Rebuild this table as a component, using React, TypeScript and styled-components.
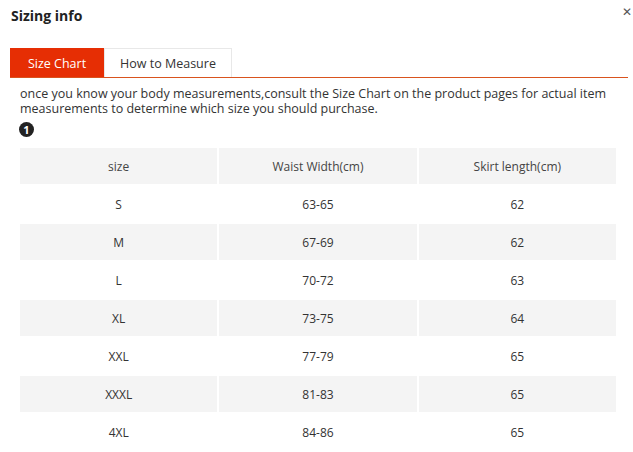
import styled, { createGlobalStyle } from "styled-components";

const GlobalStyle = createGlobalStyle`
  html, body {
    margin: 0;
    padding: 0;
    background: #fff;
  }
  body {
    font-family: "Open Sans", "Liberation Sans", sans-serif;
    color: #333;
  }
`;

const Dialog = styled.div`
  width: 633px;
  height: 452px;
  box-sizing: border-box;
  padding: 6px 5px 0 10px;
  overflow: hidden;
`;

const Header = styled.div`
  display: flex;
  justify-content: space-between;
  align-items: flex-start;
  height: 42px;
`;

const Title = styled.h2`
  margin: 0;
  padding-left: 1px;
  font-size: 14px;
  font-weight: 700;
  line-height: 20px;
  color: #222;
`;

const Close = styled.span`
  font-family: "DejaVu Sans", sans-serif;
  font-size: 12px;
  line-height: 8px;
  color: #555;
  margin: 2px -4px 0 0;
  cursor: pointer;
`;

const TabBar = styled.div`
  display: flex;
  border-bottom: 1px solid #d9531e;
`;

const Tab = styled.div<{ $active?: boolean }>`
  height: 29px;
  box-sizing: border-box;
  display: flex;
  align-items: center;
  justify-content: center;
  white-space: nowrap;
  font-size: 12.5px;
  width: ${(p) => (p.$active ? "94px" : "128px")};
  background: ${(p) => (p.$active ? "#e62e04" : "#fff")};
  color: ${(p) => (p.$active ? "#fff" : "#333")};
  border: 1px solid ${(p) => (p.$active ? "#e62e04" : "#e8e8e8")};
  border-bottom: none;
  cursor: pointer;
`;

const Content = styled.div`
  padding: 9px 0 0 10px;
`;

const Intro = styled.p`
  margin: 0;
  font-size: 12.5px;
  line-height: 14.5px;
  color: #333;
  width: 590px;
`;

const Badge = styled.span`
  display: inline-flex;
  align-items: center;
  justify-content: center;
  width: 15px;
  height: 15px;
  border-radius: 50%;
  background: #222;
  color: #fff;
  font-size: 11px;
  font-weight: 700;
  margin: 6px 0 0 -1px;
`;

const Table = styled.table`
  border-collapse: separate;
  border-spacing: 2px;
  margin: 7px 0 0 -2px;
  table-layout: fixed;
  width: 600px;
  font-size: 12px;
  color: #333;
`;

const Cell = styled.td<{ $shade?: boolean }>`
  height: 36px;
  padding: 0;
  text-align: center;
  vertical-align: middle;
  background: ${(p) => (p.$shade ? "#f4f4f4" : "#fff")};
`;

const HeadCell = styled(Cell).attrs({ as: "th" })`
  font-weight: 400;
  color: #444;
`;

const rows = [
  ["S", "63-65", "62"],
  ["M", "67-69", "62"],
  ["L", "70-72", "63"],
  ["XL", "73-75", "64"],
  ["XXL", "77-79", "65"],
  ["XXXL", "81-83", "65"],
  ["4XL", "84-86", "65"],
];

export default function App() {
  return (
    <>
      <GlobalStyle />
      <Dialog>
        <Header>
          <Title>Sizing info</Title>
          <Close>✕</Close>
        </Header>
        <TabBar>
          <Tab $active>Size Chart</Tab>
          <Tab>How to Measure</Tab>
        </TabBar>
        <Content>
          <Intro>
            once you know your body measurements,consult the Size Chart on the
            product pages for actual item measurements to determine which size
            you should purchase.
          </Intro>
          <Badge>1</Badge>
          <Table>
            <thead>
              <tr>
                <HeadCell $shade>size</HeadCell>
                <HeadCell $shade>Waist Width(cm)</HeadCell>
                <HeadCell $shade>Skirt length(cm)</HeadCell>
              </tr>
            </thead>
            <tbody>
              {rows.map((r, i) => (
                <tr key={r[0]}>
                  {r.map((v, j) => (
                    <Cell key={j} $shade={i % 2 === 1}>
                      {v}
                    </Cell>
                  ))}
                </tr>
              ))}
            </tbody>
          </Table>
        </Content>
      </Dialog>
    </>
  );
}
